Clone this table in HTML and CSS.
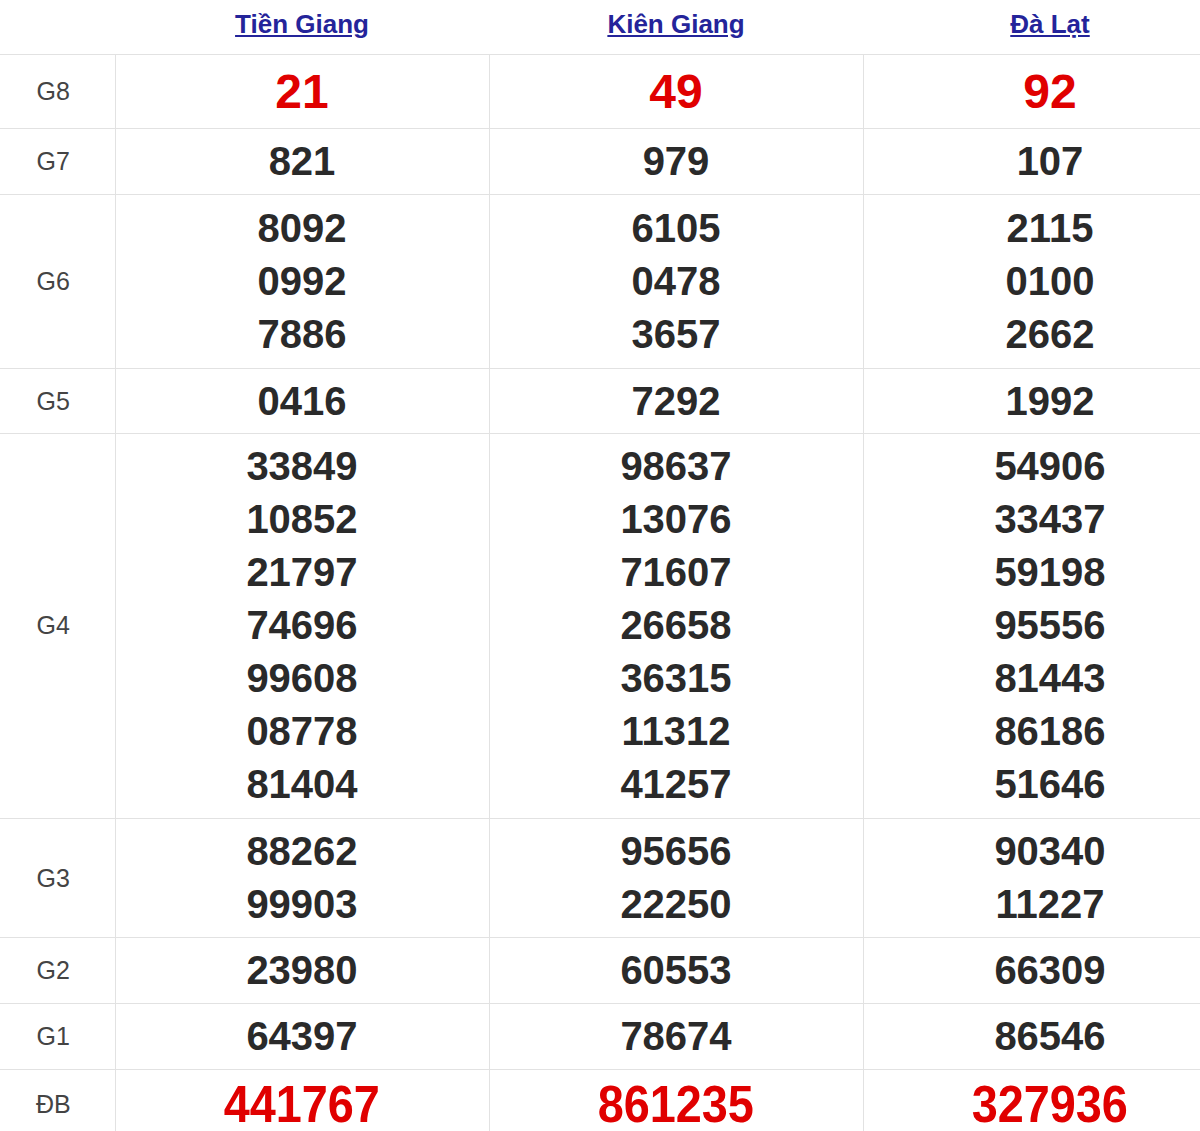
FILE: index.html
```html
<!DOCTYPE html>
<html lang="vi">
<head>
<meta charset="utf-8">
<title>Kết quả xổ số</title>
<link rel="stylesheet" href="styles.css">
</head>
<body>
<table class="kq">
  <colgroup>
    <col class="c-label">
    <col class="c-prov">
    <col class="c-prov">
    <col class="c-prov">
  </colgroup>
  <thead>
    <tr>
      <th class="h-blank"></th>
      <th><a href="#">Tiền Giang</a></th>
      <th><a href="#">Kiên Giang</a></th>
      <th><a href="#">Đà Lạt</a></th>
    </tr>
  </thead>
  <tbody>
    <tr class="r-g8">
      <td class="lbl">G8</td>
      <td><div class="n red big">21</div></td>
      <td><div class="n red big">49</div></td>
      <td><div class="n red big">92</div></td>
    </tr>
    <tr>
      <td class="lbl">G7</td>
      <td><div class="n">821</div></td>
      <td><div class="n">979</div></td>
      <td><div class="n">107</div></td>
    </tr>
    <tr class="r-g6">
      <td class="lbl">G6</td>
      <td><div class="n">8092</div><div class="n">0992</div><div class="n">7886</div></td>
      <td><div class="n">6105</div><div class="n">0478</div><div class="n">3657</div></td>
      <td><div class="n">2115</div><div class="n">0100</div><div class="n">2662</div></td>
    </tr>
    <tr class="r-g5">
      <td class="lbl">G5</td>
      <td><div class="n">0416</div></td>
      <td><div class="n">7292</div></td>
      <td><div class="n">1992</div></td>
    </tr>
    <tr class="r-g4">
      <td class="lbl">G4</td>
      <td><div class="n">33849</div><div class="n">10852</div><div class="n">21797</div><div class="n">74696</div><div class="n">99608</div><div class="n">08778</div><div class="n">81404</div></td>
      <td><div class="n">98637</div><div class="n">13076</div><div class="n">71607</div><div class="n">26658</div><div class="n">36315</div><div class="n">11312</div><div class="n">41257</div></td>
      <td><div class="n">54906</div><div class="n">33437</div><div class="n">59198</div><div class="n">95556</div><div class="n">81443</div><div class="n">86186</div><div class="n">51646</div></td>
    </tr>
    <tr>
      <td class="lbl">G3</td>
      <td><div class="n">88262</div><div class="n">99903</div></td>
      <td><div class="n">95656</div><div class="n">22250</div></td>
      <td><div class="n">90340</div><div class="n">11227</div></td>
    </tr>
    <tr>
      <td class="lbl">G2</td>
      <td><div class="n">23980</div></td>
      <td><div class="n">60553</div></td>
      <td><div class="n">66309</div></td>
    </tr>
    <tr>
      <td class="lbl">G1</td>
      <td><div class="n">64397</div></td>
      <td><div class="n">78674</div></td>
      <td><div class="n">86546</div></td>
    </tr>
    <tr class="r-db">
      <td class="lbl">ĐB</td>
      <td><div class="n red db"><span>441767</span></div></td>
      <td><div class="n red db"><span>861235</span></div></td>
      <td><div class="n red db"><span>327936</span></div></td>
    </tr>
  </tbody>
</table>
</body>
</html>
```

FILE: styles.css
```css
html, body {
  margin: 0;
  padding: 0;
  overflow: hidden;
  background: #fff;
}

body {
  font-family: "Liberation Sans", Arial, sans-serif;
  color: #222;
}

.kq {
  border-collapse: collapse;
  table-layout: fixed;
  width: 1237px;
}

.c-label { width: 115px; }
.c-prov { width: 374px; }

.kq th {
  padding: 9px 0 15px;
  line-height: 30px;
  font-size: 26px;
  font-weight: bold;
  text-align: center;
  border-bottom: 1px solid #e2e2e2;
}

.kq th a {
  color: #24249a;
  text-decoration: underline;
}

.kq td {
  border: 1px solid #e2e2e2;
  border-top: none;
  padding: 6px 0;
  text-align: center;
  vertical-align: middle;
}

.kq .r-g6 td {
  padding: 7px 0;
}

.kq .r-g5 td {
  padding: 6px 0 5px;
}

.kq .r-g4 td {
  padding: 6px 0 7px;
}

.kq tr td:first-child { border-left: none; }

.kq td.lbl {
  font-size: 25px;
  color: #444;
  padding-right: 8px;
}

.n {
  font-size: 40px;
  font-weight: bold;
  line-height: 53px;
  color: #2a2a2a;
}

.n.red { color: #e00000; }

.n.big {
  font-size: 48px;
  line-height: 61px;
}

.n.db {
  font-size: 52px;
  line-height: 56px;
}

.n.db span {
  display: inline-block;
  transform: scaleX(0.9);
}
```
